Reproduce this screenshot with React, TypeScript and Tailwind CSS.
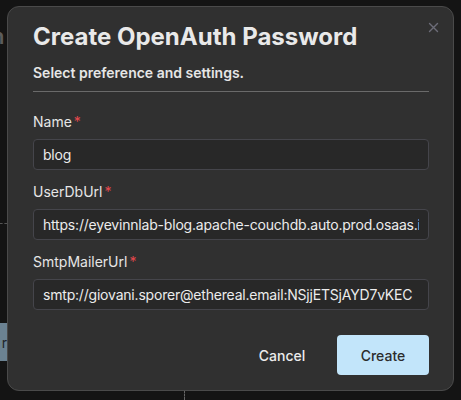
import React from 'react';

type FieldProps = {
  label: string;
  value: string;
};

const Field: React.FC<FieldProps> = ({ label, value }) => (
  <div className="flex flex-col gap-[7px]">
    <label className="flex items-center gap-[2px] text-[14px] leading-[20px] text-[#e6e6e6]">
      {label}
      <span className="text-[#e5484d]">*</span>
    </label>
    <input
      readOnly
      value={value}
      className="h-[31px] w-full rounded-[4px] border border-[#45454b] bg-[#282828] px-[9px] text-[14px] tracking-[-0.2px] text-[#ececec] outline-none"
    />
  </div>
);

export default function App() {
  return (
    <div
      className="relative h-[400px] w-[461px] overflow-hidden bg-[#141414]"
      style={{ fontFamily: 'Inter, "Noto Sans", sans-serif' }}
    >
      {/* Page underneath the modal */}
      <div className="absolute inset-0">
        <span className="absolute left-[-9px] top-[20px] text-[22px] font-semibold text-[#5c5c5c]">
          n
        </span>
        <div className="absolute left-0 top-[223px] w-[7px] border-t border-dashed border-[#555]" />
        <div className="absolute left-[-20px] top-[323px] flex h-[38px] w-[27px] items-center justify-end bg-[#6b8292] text-[14px] text-[#1d252b]">
          r
        </div>
        <div className="absolute left-[184px] top-[390px] h-[10px] border-l border-dashed border-[#666]" />
      </div>

      {/* Modal */}
      <div className="absolute inset-0 flex items-start justify-center pt-[6px]">
        <div className="relative flex w-[447px] flex-col rounded-[12px] border border-[#4a4a4a] bg-[#303030] pb-[15px] pl-[25px] pr-[24px] pt-[14px]">
          <button className="absolute right-[14px] top-[15px] text-[#6c6c78]" aria-label="Close">
            <svg width="11" height="11" viewBox="0 0 11 11" fill="none" stroke="currentColor" strokeWidth="1.4" strokeLinecap="round">
              <path d="M1.5 1.5 L9.5 9.5 M9.5 1.5 L1.5 9.5" />
            </svg>
          </button>

          <h2 className="text-[24px] font-bold leading-[32px] text-[#e9e9e9]">Create OpenAuth Password</h2>
          <p className="mt-[10px] text-[14px] font-semibold leading-[20px] text-[#e6e6e6]">
            Select preference and settings.
          </p>
          <div className="mt-[8px] h-px bg-[#6a6a6a]" />

          <div className="mt-[20px] flex flex-col gap-[12px]">
            <Field label="Name" value="blog" />
            <Field label="UserDbUrl" value="https://eyevinnlab-blog.apache-couchdb.auto.prod.osaas.io" />
            <Field label="SmtpMailerUrl" value="smtp://giovani.sporer@ethereal.email:NSjjETSjAYD7vKEC" />
          </div>

          <div className="mt-[25px] flex justify-end gap-[9px]">
            <button className="h-[40px] w-[92px] rounded-[4px] text-[14px] font-medium text-[#ececec]">Cancel</button>
            <button className="h-[40px] w-[92px] rounded-[4px] bg-[#c2e5fa] text-[14px] font-medium text-[#2c2c2c]">
              Create
            </button>
          </div>
        </div>
      </div>
    </div>
  );
}
